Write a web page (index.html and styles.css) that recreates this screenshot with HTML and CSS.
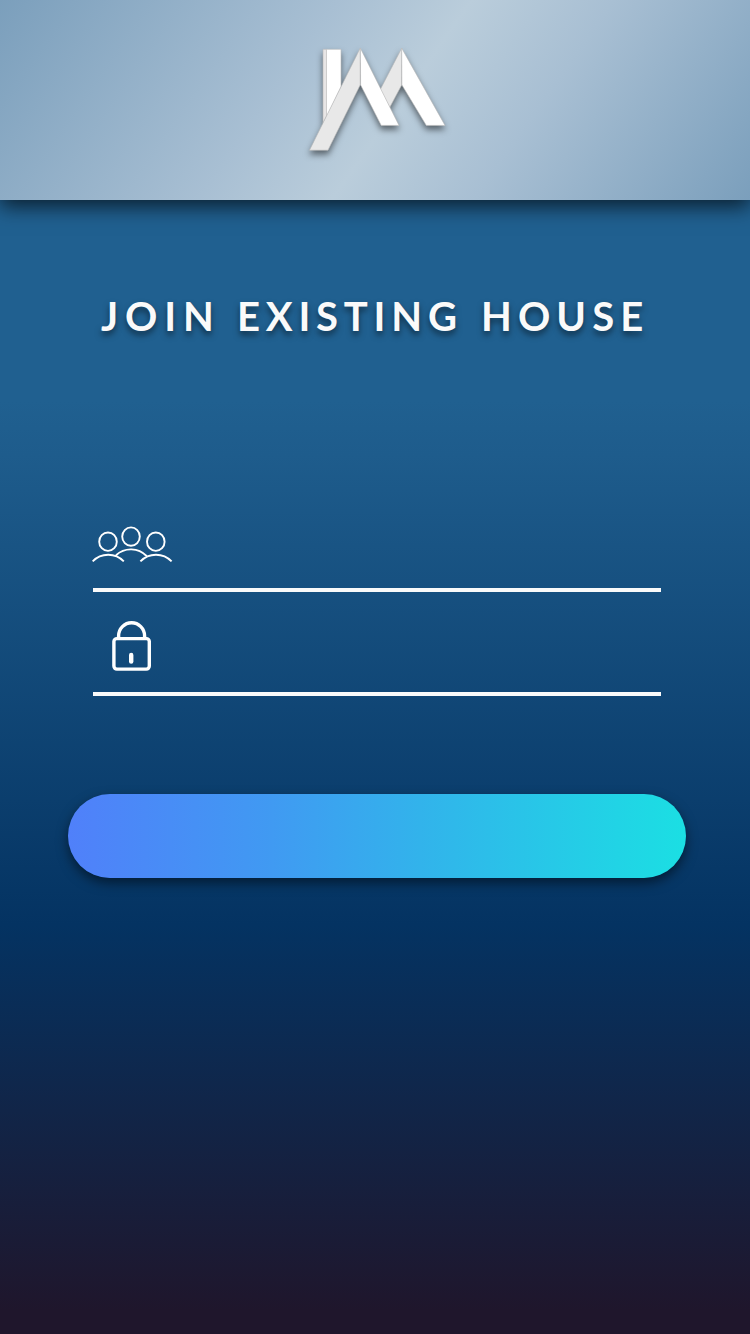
FILE: index.html
```html
<!DOCTYPE html>
<html lang="en">
<head>
<meta charset="utf-8">
<title>Join Existing House</title>
<link rel="stylesheet" href="styles.css">
</head>
<body>
<div class="screen">
  <header class="header">
    <svg class="logo" viewBox="309 48 137 103" width="137" height="103" role="img" aria-label="Logo">
      <g stroke="#b9b9b9" stroke-width=".6">
        <path fill="#e8e6e6" d="M323 49.3H327V115L323 123Z"/>
        <path fill="#fff" d="M326.5 49.3H341V87L326.5 117Z"/>
        <path fill="#e8e8e8" d="M401.7 48.2V85L389.7 107.5L380.3 89.5Z"/>
        <path fill="#fff" d="M401.7 48.2L445 125.4H426.3L401.9 85Z"/>
        <path fill="#e8e8e8" d="M360.2 48.2V85L328 150.2H309.5Z"/>
        <path fill="#fff" d="M360.4 48.2L399 125.4H381.2L360.6 85Z"/>
      </g>
    </svg>
  </header>
  <main class="content">
    <h1 class="title"><span class="join">JOIN</span><span class="existing">EXISTING</span><span class="house">HOUSE</span></h1>
    <form class="form">
      <div class="field">
        <svg class="group-icon" viewBox="92 526 81 37" width="81" height="37" fill="none" stroke="#fff" stroke-width="1.9">
          <ellipse cx="108" cy="541.7" rx="8.8" ry="9.2"/>
          <ellipse cx="131" cy="536.6" rx="8.8" ry="9.2"/>
          <ellipse cx="155.8" cy="541.7" rx="8.8" ry="9.2"/>
          <path d="M92.6 561.4A21.5 21.5 0 0 1 123.8 561.4M116 555.2A22 22 0 0 1 146.6 556M140.4 561.4A21.5 21.5 0 0 1 171.6 561.4"/>
        </svg>
      </div>
      <div class="field">
        <svg class="lock-icon" viewBox="112 621 39 50" width="39" height="50" fill="none" stroke="#fff" stroke-width="3.4">
          <rect x="113.9" y="638.6" width="35.4" height="30.5" rx="3"/>
          <path d="M118.6 638V636A13 13.2 0 0 1 144.6 636V638"/>
          <path stroke-width="4.4" stroke-linecap="round" d="M131.2 655V661.5"/>
        </svg>
      </div>
      <button class="submit" type="button" aria-label="Join"></button>
    </form>
  </main>
</div>
</body>
</html>
```
FILE: styles.css
```css
* { box-sizing: border-box; }
body { margin: 0; }
.screen {
  height: 1334px;
  overflow: hidden;
  background: linear-gradient(180deg, #206090 0, #206090 400px, #1e5c8c 455px, #043362 925px, #1f162c 1310px, #1f162c 100%);
}
.header {
  height: 200px;
  padding: 48px 0 0 309px;
  background: linear-gradient(125deg, #7b9fbc 0%, #a8bfd3 38%, #bacddb 53%, #a8bfd3 69%, #7b9fbc 100%);
  box-shadow: 0 6px 20px rgba(0, 0, 0, .7);
}
.logo {
  display: block;
  overflow: visible;
  filter: drop-shadow(0 4px 3px rgba(0, 0, 0, .5));
}
.content { padding: 92px 64px 0 68px; }
.title {
  display: flex;
  margin: 0 0 0 33px;
  color: #fafafa;
  font: 700 40px/48px Lato, sans-serif;
  white-space: nowrap;
  text-shadow: 0 4px 6px rgba(0, 0, 0, .5);
}
.join { width: 136px; letter-spacing: 6.9px; }
.existing { width: 244px; letter-spacing: 5.8px; }
.house { letter-spacing: 6.1px; }
.form { padding-top: 171px; }
.field {
  display: flex;
  width: 567.5px;
  height: 104px;
  margin-left: 25px;
  border-bottom: 4px solid #fafafa;
}
.field:first-child { height: 81px; }
.group-icon { margin: 15px 0 0 -1px; }
.lock-icon { margin: 29px 0 0 19px; }
.submit {
  display: block;
  width: 618px;
  height: 84px;
  margin-top: 98px;
  border: 0;
  border-radius: 42px;
  background: linear-gradient(90deg, #5080fa 0%, #409af2 33%, #32b3eb 57%, #1bdfe3 100%);
  box-shadow: 0 5px 12px rgba(0, 0, 0, .5);
}
```
